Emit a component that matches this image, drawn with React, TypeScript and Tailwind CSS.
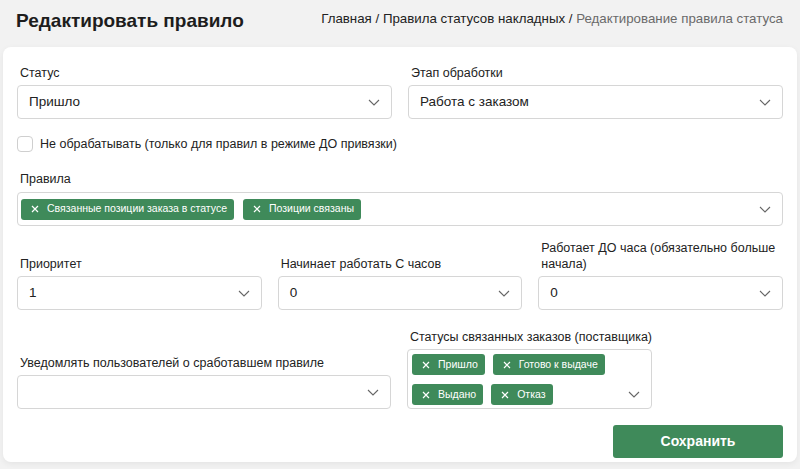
import type { ReactNode } from 'react';

function Chevron() {
  return (
    <svg width="12" height="7" viewBox="0 0 12 7" className="shrink-0 text-[#666]">
      <polyline points="1,1 6,6 11,1" fill="none" stroke="currentColor" strokeWidth="1.1" />
    </svg>
  );
}

function Label({ children, className = '' }: { children: ReactNode; className?: string }) {
  return <p className={`mb-[4px] pl-[3px] text-[12.5px] leading-[16px] text-[#222] ${className}`}>{children}</p>;
}

function Select({ value }: { value?: string }) {
  return (
    <div className="flex h-[34px] items-center justify-between rounded-[4px] border border-[#d6d6d6] bg-white pl-[11px] pr-[11px]">
      <span className="text-[13.5px] text-[#222]">{value}</span>
      <Chevron />
    </div>
  );
}

function Tag({ label }: { label: string }) {
  return (
    <span className="flex h-[21px] items-center gap-[8px] rounded-[3px] bg-[#3f8a5a] pl-[10px] pr-[7px] text-[10.5px] text-white">
      <svg width="8" height="8" viewBox="0 0 8 8">
        <path d="M1 1L7 7M7 1L1 7" stroke="white" strokeWidth="1.2" />
      </svg>
      {label}
    </span>
  );
}

export default function App() {
  return (
    <div className="h-[469px] overflow-hidden bg-[#f2f2f2] font-['Liberation_Sans',Arial,sans-serif]">
      <header className="flex h-[47px] items-center justify-between pl-[16px] pr-[17px]">
        <h1 className="-mt-[4px] text-[19px] font-bold text-[#1d1d1d]">Редактировать правило</h1>
        <nav className="-mt-[10px] text-[13.3px] text-[#222]">
          Главная / Правила статусов накладных / <span className="text-[#6a6a6a]">Редактирование правила статуса</span>
        </nav>
      </header>

      <section className="mx-[3px] rounded-[8px] bg-white px-[14px] pb-[4px] pt-[18px] shadow-[0_2px_6px_rgba(0,0,0,0.06)]">
        <div className="grid grid-cols-2 gap-x-[16px]">
          <div>
            <Label>Статус</Label>
            <Select value="Пришло" />
          </div>
          <div>
            <Label>Этап обработки</Label>
            <Select value="Работа с заказом" />
          </div>
        </div>

        <label className="mt-[17px] flex items-center gap-[7px]">
          <span className="h-[16px] w-[16px] rounded-[4px] border border-[#cfcfcf] bg-white" />
          <span className="text-[12.5px] leading-[16px] text-[#222]">
            Не обрабатывать (только для правил в режиме ДО привязки)
          </span>
        </label>

        <div className="mt-[19px]">
          <Label className="mb-[5px]">Правила</Label>
          <div className="flex h-[34px] items-center justify-between rounded-[4px] border border-[#d6d6d6] pl-[3px] pr-[11px]">
            <div className="flex gap-[9px]">
              <Tag label="Связанные позиции заказа в статусе" />
              <Tag label="Позиции связаны" />
            </div>
            <Chevron />
          </div>
        </div>

        <div className="mt-[14px] grid grid-cols-3 items-end gap-x-[16px]">
          <div>
            <Label>Приоритет</Label>
            <Select value="1" />
          </div>
          <div>
            <Label>Начинает работать С часов</Label>
            <Select value="0" />
          </div>
          <div>
            <Label>Работает ДО часа (обязательно больше начала)</Label>
            <Select value="0" />
          </div>
        </div>

        <div className="mt-[19px] flex items-end gap-x-[16px]">
          <div className="w-[374px]">
            <Label>Уведомлять пользователей о сработавшем правиле</Label>
            <Select />
          </div>
          <div>
            <Label>Статусы связанных заказов (поставщика)</Label>
            <div className="flex h-[60px] w-[245px] items-end justify-between rounded-[4px] border border-[#d6d6d6] pb-[3px] pl-[4px] pr-[11px] pt-[4px]">
              <div className="flex flex-wrap gap-x-[8px] gap-y-[9px]">
                <Tag label="Пришло" />
                <Tag label="Готово к выдаче" />
                <Tag label="Выдано" />
                <Tag label="Отказ" />
              </div>
              <span className="mb-[7px]">
                <Chevron />
              </span>
            </div>
          </div>
        </div>

        <div className="mt-[16px] flex justify-end">
          <button
            type="button"
            className="h-[33px] w-[170px] rounded-[3px] bg-[#3f8a5a] text-[14px] font-bold text-white"
          >
            Сохранить
          </button>
        </div>
      </section>
    </div>
  );
}
